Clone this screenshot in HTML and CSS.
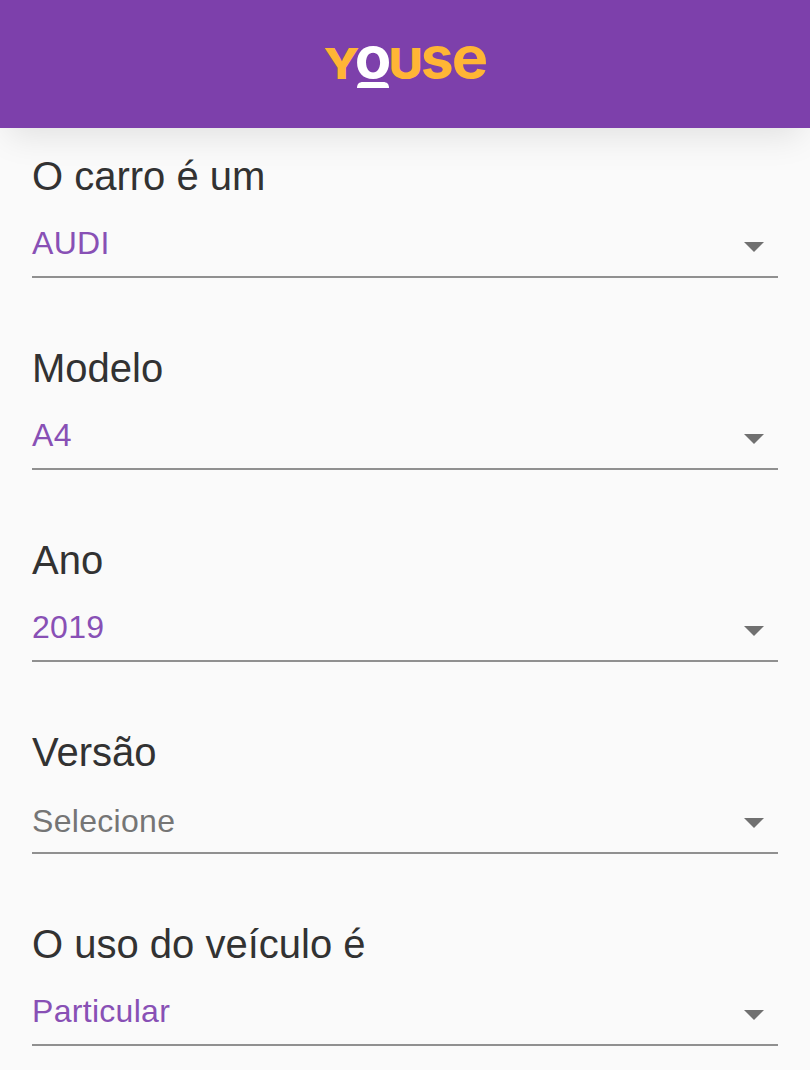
FILE: index.html
```html
<!DOCTYPE html>
<html lang="pt-BR">
<head>
<meta charset="utf-8">
<title>Youse</title>
<link rel="stylesheet" href="styles.css">
</head>
<body>
<header class="topbar">
  <svg class="logo" viewBox="0 0 164 46" role="img" aria-label="Youse">
    <text class="letter letter-cap" x="0.5" y="36.5" textLength="36" lengthAdjust="spacingAndGlyphs">Y</text>
    <text class="letter letter-white" x="31.7" y="36" textLength="36.6" lengthAdjust="spacingAndGlyphs">o</text>
    <text class="letter letter-cap" x="65.8" y="36.5" textLength="34" lengthAdjust="spacingAndGlyphs">U</text>
    <text class="letter" x="97.8" y="36" textLength="33" lengthAdjust="spacingAndGlyphs">s</text>
    <text class="letter" x="128.8" y="36" textLength="36.5" lengthAdjust="spacingAndGlyphs">e</text>
    <path class="logo-bar" d="M34 46C34 42 36 40 40 40H60C64 40 66 42 66 46Z"/>
  </svg>
</header>
<main class="form">
  <section class="field">
    <h2 class="label">O carro é um</h2>
    <div class="select"><span class="value">AUDI</span><svg class="caret" viewBox="0 0 20 10"><path d="M0 0H20L10 10Z"/></svg></div>
  </section>
  <section class="field">
    <h2 class="label">Modelo</h2>
    <div class="select"><span class="value">A4</span><svg class="caret" viewBox="0 0 20 10"><path d="M0 0H20L10 10Z"/></svg></div>
  </section>
  <section class="field">
    <h2 class="label">Ano</h2>
    <div class="select"><span class="value">2019</span><svg class="caret" viewBox="0 0 20 10"><path d="M0 0H20L10 10Z"/></svg></div>
  </section>
  <section class="field">
    <h2 class="label">Versão</h2>
    <div class="select"><span class="value placeholder">Selecione</span><svg class="caret" viewBox="0 0 20 10"><path d="M0 0H20L10 10Z"/></svg></div>
  </section>
  <section class="field">
    <h2 class="label">O uso do veículo é</h2>
    <div class="select"><span class="value">Particular</span><svg class="caret" viewBox="0 0 20 10"><path d="M0 0H20L10 10Z"/></svg></div>
  </section>
</main>
</body>
</html>
```
FILE: styles.css
```css
* { box-sizing: border-box; }
html, body { margin: 0; height: 1070px; overflow: hidden; }
body { background: #fafafa; font-family: "Liberation Sans", Arial, sans-serif; }
.topbar {
  height: 128px;
  background: #7d40ab;
  box-shadow: 0 16px 32px -8px rgba(0, 0, 0, 0.1);
  display: flex;
  justify-content: center;
  padding-top: 42px;
}
.logo { width: 164px; height: 46px; overflow: visible; }
.letter { font-family: Inter, sans-serif; font-weight: 700; font-size: 57.5px; fill: #ffb535; }
.letter-cap { font-size: 43px; font-weight: 800; }
.letter-white, .logo-bar { fill: #fff; }
.form { padding: 25px 32px 0; }
.field { height: 192px; }
.label { margin: 0; height: 47px; line-height: 46px; font-size: 40px; font-weight: 400; color: #323232; }
.select {
  height: 78px;
  border-bottom: 2px solid #909090;
  display: flex;
  justify-content: space-between;
  align-items: flex-start;
  padding: 25px 14px 0 0;
}
.value { font-size: 32px; line-height: 36px; letter-spacing: 0.3px; color: #8850b5; }
.placeholder { color: #757575; padding-top: 2px; }
.caret { width: 20px; height: 10px; margin-top: 17px; fill: #707070; }
```
